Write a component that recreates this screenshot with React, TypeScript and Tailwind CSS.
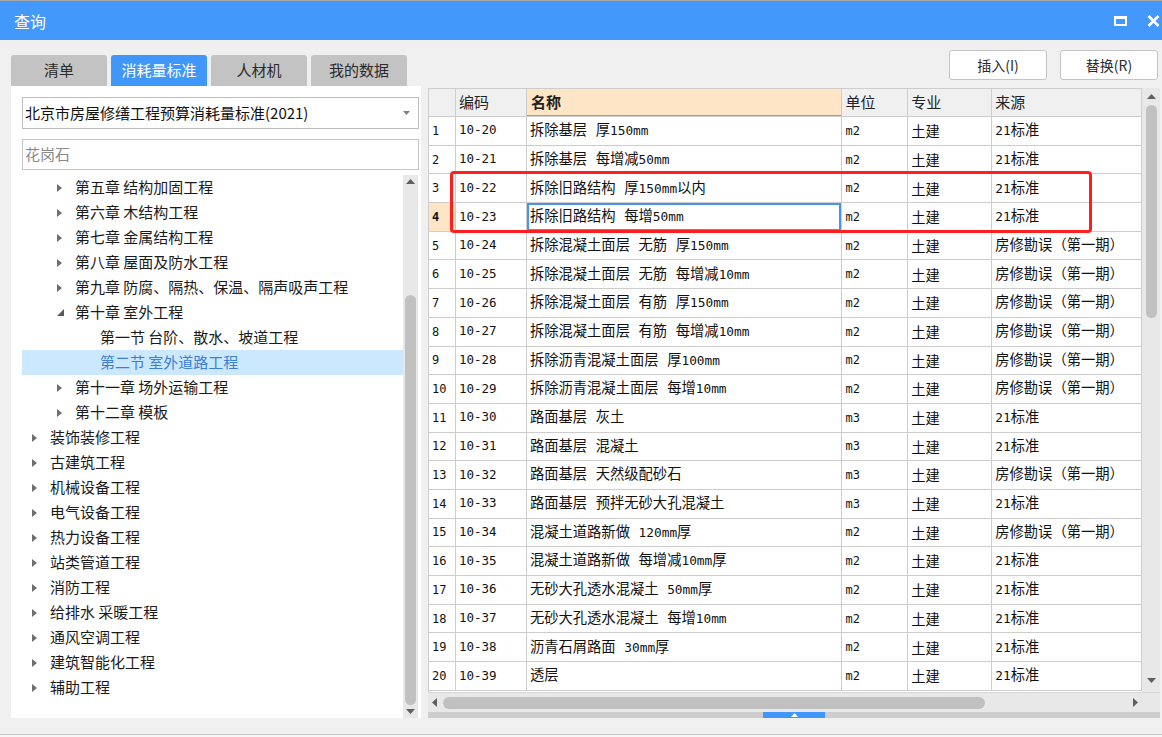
import React from 'react';

type TreeNode = { label: string; level: 0 | 1 | 2; state: 'collapsed' | 'expanded' | 'leaf'; selected?: boolean };

const tree: TreeNode[] = [
  { label: '第五章 结构加固工程', level: 1, state: 'collapsed' },
  { label: '第六章 木结构工程', level: 1, state: 'collapsed' },
  { label: '第七章 金属结构工程', level: 1, state: 'collapsed' },
  { label: '第八章 屋面及防水工程', level: 1, state: 'collapsed' },
  { label: '第九章 防腐、隔热、保温、隔声吸声工程', level: 1, state: 'collapsed' },
  { label: '第十章 室外工程', level: 1, state: 'expanded' },
  { label: '第一节 台阶、散水、坡道工程', level: 2, state: 'leaf' },
  { label: '第二节 室外道路工程', level: 2, state: 'leaf', selected: true },
  { label: '第十一章 场外运输工程', level: 1, state: 'collapsed' },
  { label: '第十二章 模板', level: 1, state: 'collapsed' },
  { label: '装饰装修工程', level: 0, state: 'collapsed' },
  { label: '古建筑工程', level: 0, state: 'collapsed' },
  { label: '机械设备工程', level: 0, state: 'collapsed' },
  { label: '电气设备工程', level: 0, state: 'collapsed' },
  { label: '热力设备工程', level: 0, state: 'collapsed' },
  { label: '站类管道工程', level: 0, state: 'collapsed' },
  { label: '消防工程', level: 0, state: 'collapsed' },
  { label: '给排水 采暖工程', level: 0, state: 'collapsed' },
  { label: '通风空调工程', level: 0, state: 'collapsed' },
  { label: '建筑智能化工程', level: 0, state: 'collapsed' },
  { label: '辅助工程', level: 0, state: 'collapsed' },
];

const indent = ['pl-[10px]', 'pl-[35px]', 'pl-[60px]'];

const FIX = '房修勘误（第一期）';
const STD = '21标准';

// [编码, 名称, 单位, 来源]
const rows: [string, string, string, string][] = [
  ['10-20', '拆除基层 厚150mm', 'm2', STD],
  ['10-21', '拆除基层 每增减50mm', 'm2', STD],
  ['10-22', '拆除旧路结构 厚150mm以内', 'm2', STD],
  ['10-23', '拆除旧路结构 每增50mm', 'm2', STD],
  ['10-24', '拆除混凝土面层 无筋 厚150mm', 'm2', FIX],
  ['10-25', '拆除混凝土面层 无筋 每增减10mm', 'm2', FIX],
  ['10-26', '拆除混凝土面层 有筋 厚150mm', 'm2', FIX],
  ['10-27', '拆除混凝土面层 有筋 每增减10mm', 'm2', FIX],
  ['10-28', '拆除沥青混凝土面层 厚100mm', 'm2', FIX],
  ['10-29', '拆除沥青混凝土面层 每增10mm', 'm2', FIX],
  ['10-30', '路面基层 灰土', 'm3', STD],
  ['10-31', '路面基层 混凝土', 'm3', STD],
  ['10-32', '路面基层 天然级配砂石', 'm3', FIX],
  ['10-33', '路面基层 预拌无砂大孔混凝土', 'm3', STD],
  ['10-34', '混凝土道路新做 120mm厚', 'm2', FIX],
  ['10-35', '混凝土道路新做 每增减10mm厚', 'm2', STD],
  ['10-36', '无砂大孔透水混凝土 50mm厚', 'm2', STD],
  ['10-37', '无砂大孔透水混凝土 每增10mm', 'm2', STD],
  ['10-38', '沥青石屑路面 30mm厚', 'm2', STD],
  ['10-39', '透层', 'm2', STD],
];

// latin runs are narrower than the CJK glyphs in this grid font
const Mixed = ({ text }: { text: string }) => (
  <span>
    {text.split(/([A-Za-z0-9\-]+)/).map((part, i) =>
      /^[A-Za-z0-9\-]+$/.test(part) ? (
        <span key={i} className="text-[12.8px]">{part}</span>
      ) : (
        <span key={i}>{part}</span>
      )
    )}
  </span>
);

const UpArrow = () => (
  <svg width="9" height="5" viewBox="0 0 9 5"><path d="M0 5 L4.5 0 L9 5Z" fill="#5f5f5f" /></svg>
);
const DownArrow = () => (
  <svg width="9" height="5" viewBox="0 0 9 5"><path d="M0 0 L9 0 L4.5 5Z" fill="#5f5f5f" /></svg>
);

const cell = 'h-full flex items-center border-r border-[#cdcdcd] overflow-hidden whitespace-nowrap';

export default function App() {
  return (
    <div className="w-[1162px] h-[737px] bg-[#f0f0f0] flex flex-col overflow-hidden font-['Noto_Sans_CJK_SC',sans-serif] text-[#1a1a1a]">
      {/* Title bar */}
      <div className="h-[40px] shrink-0 border-t border-[#a9a9a9] bg-[#4298fb] flex items-center pl-[14px] pr-[2px]">
        <span className="text-white text-[16px]">查询</span>
        <div className="ml-auto flex items-center gap-[20px]">
          <svg width="13" height="10" viewBox="0 0 13 10">
            <rect x="1" y="1.5" width="11" height="7.5" fill="none" stroke="#fff" strokeWidth="2" />
            <rect x="0" y="0" width="13" height="3" fill="#fff" />
          </svg>
          <svg width="13" height="12" viewBox="0 0 13 12">
            <path d="M1.5 1 L11.5 11 M11.5 1 L1.5 11" stroke="#fff" strokeWidth="2.6" />
          </svg>
        </div>
      </div>

      <div className="flex flex-1 pl-[11px]">
        {/* Left column */}
        <div className="w-[410px] pt-[15px] flex flex-col">
          <div className="h-[31px] flex gap-[4px]">
            {['清单', '消耗量标准', '人材机', '我的数据'].map((t, i) => (
              <div
                key={t}
                className={`w-[96px] rounded-t-[3px] flex items-center justify-center text-[15px] ${i === 1 ? 'bg-[#3f97fb] text-white' : 'bg-[#c3c3c3] text-[#2a2a2a]'}`}
              >
                {t}
              </div>
            ))}
          </div>
          <div className="h-[632px] bg-white pl-[11px] pr-[2px] pt-[11px] flex flex-col">
            <div className="h-[32px] border border-[#bdbdbd] flex items-center pl-[2px] pr-[8px]">
              <span className="text-[15px] text-[#111]">北京市房屋修缮工程预算消耗量标准(2021)</span>
              <svg className="ml-auto" width="7" height="4" viewBox="0 0 7 4"><path d="M0 0 L7 0 L3.5 4Z" fill="#808080" /></svg>
            </div>
            <div className="h-[31px] mt-[10px] border border-[#c6c6c6] flex items-center pl-[2px]">
              <span className="text-[15px] text-[#8a8a8a]">花岗石</span>
            </div>
            <div className="flex mt-[5px] flex-1">
              <div className="w-[381px] flex flex-col">
                {tree.map((n) => (
                  <div
                    key={n.label}
                    className={`h-[25px] shrink-0 flex items-center ${indent[n.level]} ${n.selected ? 'bg-[#cce8ff] text-[#3b7fd6]' : ''}`}
                  >
                    <span className="w-[18px] flex items-center">
                      {n.state === 'collapsed' && (
                        <svg width="5" height="8" viewBox="0 0 5 8"><path d="M0 0 L5 4 L0 8Z" fill="#6e6e6e" /></svg>
                      )}
                      {n.state === 'expanded' && (
                        <svg width="7" height="7" viewBox="0 0 7 7"><path d="M7 0 L7 7 L0 7Z" fill="#5a5a5a" /></svg>
                      )}
                    </span>
                    <span className="text-[15px]">{n.label}</span>
                  </div>
                ))}
              </div>
              <div className="w-[15px] bg-[#e8e8e8] flex flex-col items-center">
                <div className="h-[12px] flex items-center"><UpArrow /></div>
                <div className="mt-[108px] w-[11px] h-[410px] rounded-full bg-[#c1c1c1]" />
                <div className="flex-1 flex items-center"><DownArrow /></div>
              </div>
            </div>
          </div>
        </div>

        {/* Right column */}
        <div className="w-[732px] ml-[7px] pt-[10px] flex flex-col">
          <div className="h-[30px] flex justify-end gap-[13px] pr-[2px]">
            <button className="w-[98px] h-[30px] bg-white border border-[#c4c4c4] rounded-[3px] text-[14px] text-[#2a2a2a]">插入(I)</button>
            <button className="w-[98px] h-[30px] bg-white border border-[#c4c4c4] rounded-[3px] text-[14px] text-[#2a2a2a]">替换(R)</button>
          </div>
          <div className="mt-[8px] h-[630px] bg-white flex flex-col">
            <div className="h-[604px] flex">
              <div className="relative w-[714px] overflow-hidden border-l border-t border-[#cdcdcd] flex flex-col">
                {/* header */}
                <div className="h-[28px] shrink-0 flex bg-[#f0f0f0] border-b border-[#cdcdcd] text-[15px] text-[#222]">
                  <div className={`${cell} w-[27px]`} />
                  <div className={`${cell} w-[71px] pl-[3px]`}>编码</div>
                  <div className={`${cell} w-[316px] pl-[4px] bg-[#fde5c6] font-bold border-b border-b-[#6ea8ec]`}>名称</div>
                  <div className={`${cell} w-[66px] pl-[3px]`}>单位</div>
                  <div className={`${cell} w-[84px] pl-[3px]`}>专业</div>
                  <div className={`${cell} w-[150px] pl-[3px]`}>来源</div>
                </div>
                {rows.map(([code, name, unit, src], i) => {
                  const sel = i === 3;
                  return (
                    <div key={code} className="h-[28.7px] shrink-0 flex border-b border-[#cdcdcd] font-['DejaVu_Sans_Mono','Noto_Sans_CJK_SC',monospace] text-[#111]">
                      <div className={`${cell} w-[27px] pl-[3px] text-[12px] ${sel ? 'bg-[#fde5c6] font-bold' : ''}`}>{i + 1}</div>
                      <div className={`${cell} w-[71px] pl-[3px] text-[12.5px]`}>{code}</div>
                      <div className={`${cell} w-[316px] pl-[3px] text-[14.3px] ${sel ? 'shadow-[inset_0_0_0_2px_#4b93e9]' : ''}`}><Mixed text={name} /></div>
                      <div className={`${cell} w-[66px] pl-[3px] text-[12px]`}>{unit}</div>
                      <div className={`${cell} w-[84px] pl-[3px] text-[14.3px] font-['Noto_Sans_CJK_SC',sans-serif]`}>土建</div>
                      <div className={`${cell} w-[150px] pl-[3px] text-[14.3px]`}><Mixed text={src} /></div>
                    </div>
                  );
                })}
                {/* highlight box */}
                <div className="absolute left-[21px] top-[82px] w-[642px] h-[62px] border-[3px] border-[#ff1f1f] rounded-[4px]" />
              </div>
              <div className="w-[18px] bg-[#e8e8e8] flex flex-col items-center">
                <div className="h-[16px] flex items-center"><UpArrow /></div>
                <div className="mt-[1px] w-[11px] h-[213px] rounded-full bg-[#c1c1c1]" />
                <div className="flex-1" />
                <div className="h-[14px] flex items-start"><DownArrow /></div>
              </div>
            </div>
            <div className="h-[20px] flex bg-[#e8e8e8] border-t border-[#d6d6d6]">
              <div className="w-[714px] flex items-center">
                <div className="w-[12px] flex justify-center">
                  <svg width="5" height="9" viewBox="0 0 5 9"><path d="M5 0 L0 4.5 L5 9Z" fill="#5f5f5f" /></svg>
                </div>
                <div className="ml-[3px] w-[542px] h-[12px] rounded-full bg-[#c1c1c1]" />
                <div className="flex-1" />
                <div className="w-[14px] flex justify-center">
                  <svg width="5" height="9" viewBox="0 0 5 9"><path d="M0 0 L5 4.5 L0 9Z" fill="#5f5f5f" /></svg>
                </div>
              </div>
              <div className="w-[18px]" />
            </div>
            <div className="h-[6px] bg-[#cdcdcd] flex justify-center">
              <div className="w-[62px] h-full bg-[#3f97fb] flex items-center justify-center">
                <svg width="7" height="4" viewBox="0 0 7 4"><path d="M0 4 L3.5 0 L7 4Z" fill="#fff" /></svg>
              </div>
            </div>
          </div>
        </div>
      </div>
      <div className="h-[1px] bg-[#c8c8c8] shrink-0" />
      <div className="h-[2px] bg-[#f7f7f7] shrink-0" />
    </div>
  );
}
